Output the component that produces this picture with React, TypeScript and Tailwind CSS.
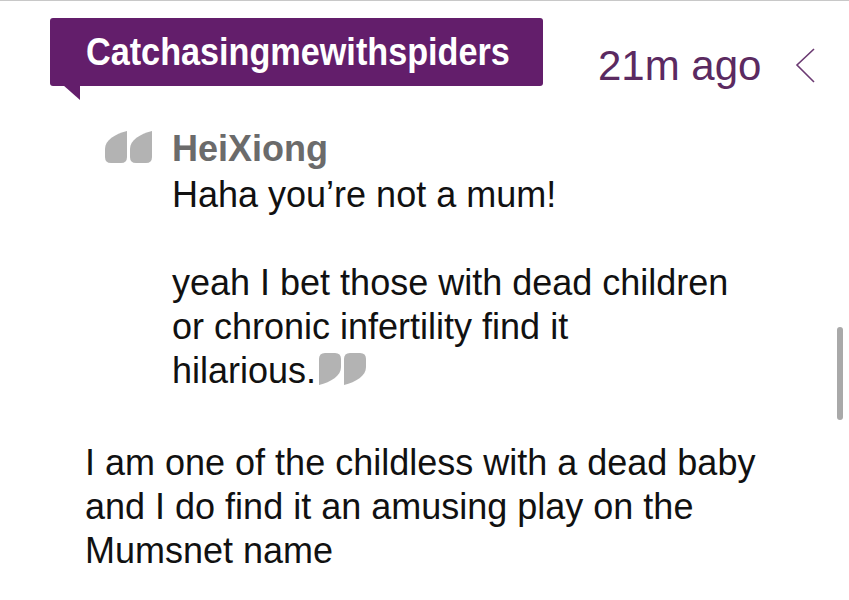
import React from 'react';

const QuoteMark: React.FC<{ className?: string }> = ({ className }) => (
    <svg className={className} width="47" height="32" viewBox="0 0 47 32" fill="#b3b3b3">
        <path d="M22 0 L22 26 Q22 32 16 32 L6 32 Q0 32 0 26 L0 18 C0 9 10 3 22 0 Z" />
        <path d="M47 0 L47 26 Q47 32 41 32 L31 32 Q25 32 25 26 L25 18 C25 9 35 3 47 0 Z" />
    </svg>
);

const App: React.FC = () => {
    return (
        <div
            className="relative w-[849px] h-[600px] overflow-hidden bg-white border-t border-[#c8c8c8]"
            style={{ fontFamily: '"Liberation Sans", Arial, sans-serif' }}
        >
            {/* header: username bubble + time */}
            <div className="flex items-start pt-[17px] pl-[50px]">
                <div className="relative flex items-center h-[68px] w-[493px] pl-[36px] rounded-[3px] bg-[#631e6b]">
                    <span className="inline-block origin-left scale-x-[0.9] whitespace-nowrap text-white font-bold text-[38px] leading-[38px]">
                        Catchasingmewithspiders
                    </span>
                    <svg className="absolute left-[13px] top-[67px]" width="18" height="15" viewBox="0 0 18 15">
                        <path d="M0 0 L17 0 L17 15 Z" fill="#631e6b" />
                    </svg>
                </div>
                <span className="ml-[55px] mt-[27px] text-[42px] leading-[42px] text-[#5b2a61]">21m ago</span>
                <svg className="ml-[34px] mt-[30px]" width="22" height="36" viewBox="0 0 22 36" fill="none">
                    <path d="M19 1 L2 17 L19 34" stroke="#6b3a72" strokeWidth="1.6" />
                </svg>
            </div>

            {/* quoted post */}
            <div className="flex items-start mt-[40px] pl-[105px]">
                <QuoteMark className="mt-[4px] shrink-0" />
                <div className="ml-[20px] text-[36px] leading-[44px] text-[#111111]">
                    <div className="font-bold text-[#6b6b6b] mb-[2px]">HeiXiong</div>
                    <div>Haha you’re not a mum!</div>
                    <div className="h-[44px]" />
                    <div>
                        yeah I bet those with dead children
                        <br />
                        or chronic infertility find it
                        <br />
                        <span className="whitespace-nowrap">
                            hilarious.
                            <QuoteMark className="inline-block ml-[3px] rotate-180 align-[-2px]" />
                        </span>
                    </div>
                </div>
            </div>

            {/* reply */}
            <div className="mt-[48px] pl-[85px] w-[760px] text-[36px] leading-[44px] text-[#111111]">
                I am one of the childless with a dead baby and I do find it an amusing play on the Mumsnet name
            </div>

            {/* scroll indicator */}
            <div className="absolute right-[6px] top-[326px] w-[6px] h-[93px] rounded-full bg-[#a9a9a9]" />
        </div>
    );
};

export default App;
